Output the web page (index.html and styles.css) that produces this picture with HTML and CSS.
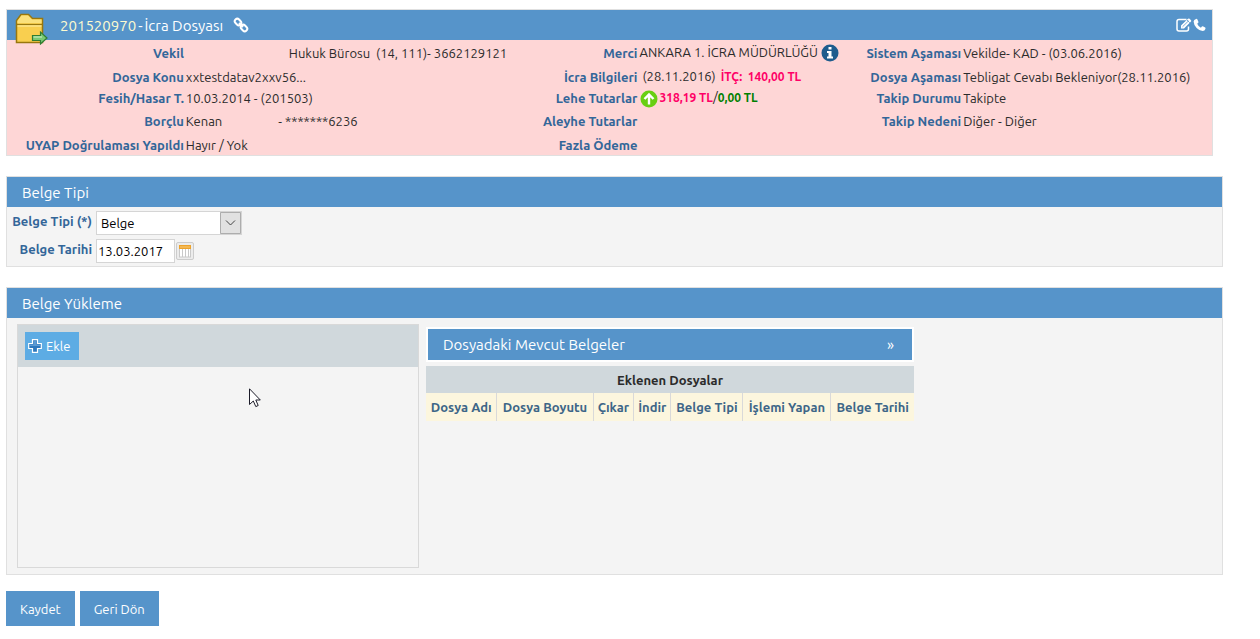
FILE: index.html
```html
<!DOCTYPE html>
<html lang="tr">
<head>
<meta charset="utf-8">
<title>İcra Dosyası</title>
<link rel="stylesheet" href="styles.css">
</head>
<body>
<main class="page">
  <section class="panel case">
    <header class="bar case-bar">
      <svg class="folder" viewBox="0 0 34 32" aria-hidden="true">
        <path d="M1.5 29.5V7.5L6 1.500H13.500L17.500 5.500H27.500V29.500Z" fill="#f9cf4f" stroke="#98770f" stroke-width="1.500"/>
        <path d="M2.500 10V8L6.500 2.500H13L17 6.500H26.500V10Z" fill="#fbe17c"/>
        <path d="M1.500 11.500H27.500" stroke="#98770f" stroke-width="1.200"/>
        <path d="M2.500 13H26.500" stroke="#fff0a8"/>
        <path d="M17.500 22.500H25.500V19L32 25L25.500 31V27.500H17.500Z" fill="#79c974" stroke="#2f7d32" stroke-width="1.200"/>
        <path d="M18.500 24H27" stroke="#d4f2c9"/>
      </svg>
      <h1 class="bar-title case-title"><span class="case-no">201520970</span><span>-</span><span>İcra Dosyası</span></h1>
      <svg class="link-icon" viewBox="0 0 16 16" fill="none" stroke="#fff" stroke-width="2" aria-hidden="true">
        <rect x="1.500" y="2.500" width="7" height="5" rx="2.500" transform="rotate(45 5 5)"/>
        <rect x="7.500" y="8.500" width="7" height="5" rx="2.500" transform="rotate(45 11 11)"/>
        <path d="M6 6L10 10"/>
      </svg>
      <span class="bar-tools">
        <svg width="16" height="14" viewBox="0 0 16 14" aria-hidden="true">
          <path d="M10.500 1.500H3Q1 1.500 1 3.500V11Q1 13 3 13H10.500Q12.500 13 12.500 11V8.500" fill="none" stroke="#fff" stroke-width="1.500"/>
          <path d="M5 10.500V7.500L12 .8Q12.800 0 13.600 .8L15 2.200Q15.600 2.900 15 3.600L8 10.500Z" fill="#fff"/>
          <path d="M6.500 8.800L12.500 2.900M11 2L13.800 4.800" stroke="#5694ca" stroke-width=".8"/>
        </svg>
        <svg width="13" height="14" viewBox="0 0 13 14" aria-hidden="true">
          <path d="M3 1Q4 .6 4.300 1.300L5.500 4Q5.700 4.600 4.200 5.700Q5.200 8.200 7.900 9.700Q9.200 8 9.800 8.300L12.200 9.600Q12.700 10 12.400 11Q11.800 13 9.700 13Q6.500 12.800 3.600 9.900Q.7 6.800 .6 3.500Q.8 1.700 3 1Z" fill="#fff"/>
        </svg>
      </span>
    </header>
    <div class="facts">
      <b>Vekil</b><span class="attorney">Hukuk Bürosu&nbsp; (14, 111)- 3662129121</span>
      <b>Merci</b><span>ANKARA 1. İCRA MÜDÜRLÜĞÜ<svg class="info" viewBox="0 0 18 18" aria-hidden="true"><circle cx="9" cy="9" r="8.500" fill="#1f5c8d"/><path d="M7.500 3H10.500V5.500H7.500ZM6 7H10.500V12.500H12V14.500H6V12.500H7.500V9H6Z" fill="#fff"/></svg></span>
      <b>Sistem Aşaması</b><span>Vekilde- KAD - (03.06.2016)</span>

      <b>Dosya Konu</b><span>xxtestdatav2xxv56...</span>
      <b>İcra Bilgileri</b><span class="inset">(28.11.2016) <strong class="debt">İTÇ: &nbsp;140,00 TL</strong></span>
      <b>Dosya Aşaması</b><span>Tebligat Cevabı Bekleniyor(28.11.2016)</span>

      <b>Fesih/Hasar T.</b><span>10.03.2014 - (201503)</span>
      <b>Lehe Tutarlar</b><span><svg class="up" viewBox="0 0 18 18" aria-hidden="true"><circle cx="9" cy="9" r="8.500" fill="#67cf12"/><path d="M9 14.500V5M4.500 9L9 4.500L13.500 9" fill="none" stroke="#fff" stroke-width="2.400"/></svg><strong class="debt">318,19 TL</strong>/<strong class="paid">0,00 TL</strong></span>
      <b>Takip Durumu</b><span>Takipte</span>

      <b>Borçlu</b><span class="debtor"><span>Kenan</span><span>- *******6236</span></span>
      <b>Aleyhe Tutarlar</b><span></span>
      <b>Takip Nedeni</b><span>Diğer - Diğer</span>

      <b>UYAP Doğrulaması Yapıldı</b><span>Hayır / Yok</span>
      <b>Fazla Ödeme</b><span></span>
    </div>
  </section>

  <section class="panel">
    <header class="bar"><h2 class="bar-title">Belge Tipi</h2></header>
    <div class="form">
      <label for="type">Belge Tipi (*)</label>
      <div class="select-wrap">
        <select id="type"><option>Belge</option></select>
        <svg class="chevron" viewBox="0 0 21 22" aria-hidden="true"><path d="M0 0H21V22H0Z" fill="#e1e1e1"/><path d="M.5 .5H20.500V21.500H.5Z" fill="none" stroke="#adadad"/><path d="M6 8.500L10.500 13L15 8.500" fill="none" stroke="#444"/></svg>
      </div>
      <label for="date">Belge Tarihi</label>
      <div class="date-wrap">
        <input id="date" type="text" value="13.03.2017">
        <button class="calendar" type="button" aria-label="Takvim">
          <svg width="14" height="14" viewBox="0 0 14 14" aria-hidden="true"><path d="M1 1H13V13H1Z" fill="#fff"/><path d="M1 1H13V5H1Z" fill="#eda32c"/><path d="M2 3H12" stroke="#f9cd7c"/><path d="M1.500 5V13M4.500 5V13M7.500 5V13M10.500 5V13M12.500 5V13M1 13H13" stroke="#c9c9c9"/></svg>
        </button>
      </div>
    </div>
  </section>

  <section class="panel">
    <header class="bar"><h2 class="bar-title">Belge Yükleme</h2></header>
    <div class="upload">
      <div class="drop">
        <div class="drop-bar">
          <button class="add" type="button">
            <svg width="14" height="14" viewBox="0 0 14 14" aria-hidden="true"><path d="M4.500 .7H9.500V4.500H13.300V9.500H9.500V13.300H4.500V9.500H.7V4.500H4.500Z" fill="#2c78bd" stroke="#fff" stroke-width="1.200"/><path d="M5.500 2H8.500V5.500H12V7H2V5.500H5.500Z" fill="#5c9bd3"/></svg>Ekle
          </button>
        </div>
        <svg class="pointer" viewBox="0 0 12 20" aria-hidden="true"><path d="M.5 .8V16.500L4.300 13L6.800 18.600L9.200 17.500L6.800 12H11.300Z" fill="#fff" stroke="#1b1b28"/></svg>
      </div>
      <div class="files">
        <button class="bar accordion" type="button"><span>Dosyadaki Mevcut Belgeler</span><span class="more">»</span></button>
        <table>
          <thead>
            <tr class="caption"><th colspan="7">Eklenen Dosyalar</th></tr>
            <tr class="cols"><th>Dosya Adı</th><th>Dosya Boyutu</th><th>Çıkar</th><th>İndir</th><th>Belge Tipi</th><th>İşlemi Yapan</th><th>Belge Tarihi</th></tr>
          </thead>
        </table>
      </div>
    </div>
  </section>

  <div class="actions">
    <button type="button">Kaydet</button>
    <button type="button">Geri Dön</button>
  </div>
</main>
</body>
</html>
```
FILE: styles.css
```css
* { box-sizing: border-box; }
body {
  margin: 0;
  background: #fff;
  color: #2b2b2b;
  font: 13px/18px Ubuntu, "Noto Sans", sans-serif;
}
button, input, select { font: inherit; border-radius: 0; }
.page { padding: 9px 37px 12px 6px; }

.panel {
  margin-bottom: 20px;
  border: 1px solid #e0e0e0;
  background: #f4f4f4;
}
.bar {
  display: flex;
  align-items: center;
  height: 30px;
  padding: 0 15px;
  background: #5694ca;
  color: #fff;
}
.bar-title { margin: 0; padding-top: 2px; font-size: 15px; line-height: 20px; font-weight: 400; }

.case { margin-right: 10px; background: #fed6d6; }
.case-bar { position: relative; padding: 0 6px 0 53px; }
.case-title { display: flex; gap: 2px; }
.case-no { color: #fdfbd0; }
.folder { position: absolute; left: 8px; top: 3px; width: 34px; height: 32px; }
.link-icon { width: 16px; height: 16px; margin-left: 10px; }
.bar-tools { display: flex; gap: 1px; margin-left: auto; }

.facts {
  display: grid;
  grid-template-columns:
    minmax(0, 177fr) minmax(0, 277fr) minmax(0, 177fr)
    minmax(0, 195fr) minmax(0, 129fr) minmax(0, 251fr);
  grid-template-rows: 25px 23px 20px 26px 21px;
  align-items: center;
  white-space: nowrap;
}
.facts > b { text-align: right; }
.facts b, label { color: #369; font-weight: 700; }
.facts > span { padding-left: 2px; }
.facts > .attorney { padding-left: 105px; }
.facts > .inset { padding-left: 5px; }
.facts strong { font-size: 12px; }
.debt { color: #f06; }
.inset .debt { margin-left: 2px; }
.paid { color: #008000; }
.facts > .debtor { display: flex; gap: 56px; }
.info, .up { width: 18px; height: 18px; vertical-align: middle; }
.info { margin-left: 3px; }
.up { margin: 0 1px; }

.form {
  display: grid;
  grid-template-columns: 85px 1fr;
  gap: 4px;
  padding: 4px 0 3px;
}
label { text-align: right; line-height: 20px; }
.select-wrap { position: relative; width: 146px; }
select {
  appearance: none;
  display: block;
  width: 100%;
  height: 24px;
  padding: 0 4px;
  border: 1px solid #d5d5d5;
  background: #fff;
  color: #000;
}
.chevron { position: absolute; right: 1px; top: 1px; width: 21px; height: 22px; pointer-events: none; }
.date-wrap { display: flex; align-items: center; gap: 1px; }
input {
  width: 79px;
  height: 24px;
  padding: 0 1px;
  border: 1px solid #d5d5d5;
  background: #fff;
  color: #000;
}
.calendar {
  display: grid;
  place-items: center;
  width: 18px;
  height: 18px;
  padding: 0;
  border: 1px solid #ccc;
  border-radius: 2px;
  background: #ececec;
}

.upload { display: flex; align-items: flex-start; gap: 7px; padding: 6px 10px; }
.drop { position: relative; width: 402px; min-height: 244px; border: 1px solid #d9d9d9; }
.drop-bar { padding: 7px; background: #d0d8dc; }
.add {
  display: flex;
  align-items: center;
  gap: 4px;
  height: 28px;
  padding: 0 9px 0 3px;
  border: 0;
  background: #5dace4;
  color: #fff;
}
.pointer { position: absolute; left: 231px; top: 63px; width: 12px; height: 20px; }
.files { width: 488px; padding-top: 3px; }
.accordion {
  justify-content: space-between;
  width: 100%;
  height: 35px;
  border: 2px solid #fff;
  font-size: 15px;
}
.more { padding-right: 3px; }
table { width: 100%; margin-top: 4px; border-collapse: collapse; }
th { padding: 0 3px; font-weight: 700; text-align: center; white-space: nowrap; }
.caption th { height: 27px; background: #d0d8dc; }
.cols th { height: 28px; background: #fcf6de; color: #3e6688; }
.cols th + th { border-left: 1px solid #d9d9d9; }

.actions { display: flex; gap: 5px; margin-top: -4px; }
.actions button {
  height: 35px;
  padding: 0 14px;
  border: 0;
  background: #5694ca;
  color: #fff;
}
```
